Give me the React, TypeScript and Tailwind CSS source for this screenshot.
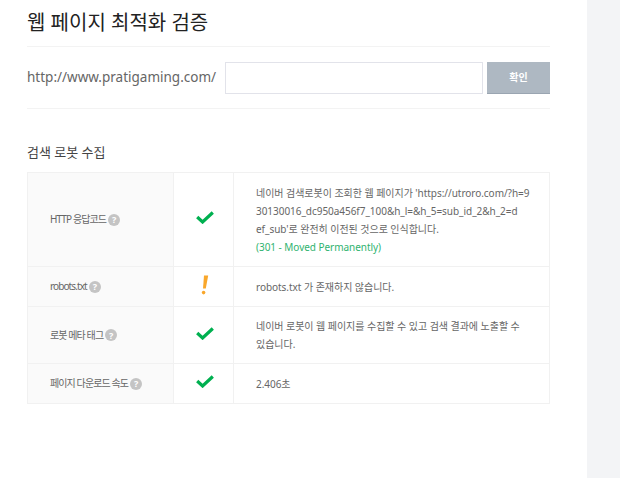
const font = { fontFamily: '"Noto Sans", "Noto Sans CJK KR", "Liberation Sans", sans-serif' };

function Help() {
  return (
    <span className="ml-[2px] inline-flex h-[12px] w-[12px] shrink-0 items-center justify-center rounded-full bg-[#c4c4c4] text-[9px] leading-none font-bold tracking-normal text-white">
      ?
    </span>
  );
}

function Check() {
  return (
    <svg className="ml-[3px]" width="18" height="13" viewBox="0 0 18 13" fill="none">
      <path d="M1.2 6 L6.6 11 L16.8 1.5" stroke="#00b050" strokeWidth="3.2" />
    </svg>
  );
}

function Warn() {
  return (
    <svg className="ml-[3px]" width="8" height="20" viewBox="0 0 8 20" fill="#f9a72b">
      <path d="M3 0.5 H7.2 L4.8 13.5 H2 Z" />
      <circle cx="2.6" cy="17.6" r="1.8" />
    </svg>
  );
}

const rows = [
  {
    h: "h-[94px]",
    label: "HTTP 응답코드",
    icon: <Check />,
    body: (
      <>
        네이버 검색로봇이 조회한 웹 페이지가 'https://utroro.com/?h=9
        <br />
        30130016_dc950a456f7_100&amp;h_l=&amp;h_5=sub_id_2&amp;h_2=d
        <br />
        ef_sub'로 완전히 이전된 것으로 인식합니다.
        <br />
        <span className="text-[#2fb36f]">(301 - Moved Permanently)</span>
      </>
    ),
  },
  { h: "h-[40px]", label: "robots.txt", icon: <Warn />, body: "robots.txt 가 존재하지 않습니다." },
  {
    h: "h-[57px]",
    label: "로봇 메타 태그",
    icon: <Check />,
    body: (
      <>
        네이버 로봇이 웹 페이지를 수집할 수 있고 검색 결과에 노출할 수
        <br />
        있습니다.
      </>
    ),
  },
  { h: "h-[40px]", label: "페이지 다운로드 속도", icon: <Check />, body: "2.406초" },
];

export default function App() {
  return (
    <div className="flex h-[478px] w-[620px] overflow-hidden bg-white" style={font}>
      <main className="w-[587px] pr-[37px] pl-[27px]">
        <h1 className="h-[47px] border-b border-[#f3f3f3] pt-[7px] text-[20px] leading-[32px] font-normal text-[#222]">
          웹 페이지 최적화 검증
        </h1>
        <div className="flex h-[62px] items-center border-b border-[#f3f3f3]">
          <span className="w-[198px] text-[13.5px] whitespace-nowrap text-[#666]">http://www.pratigaming.com/</span>
          <input className="h-[32px] w-[258px] border border-[#e2e3ea] bg-white" />
          <button className="ml-[4px] h-[32px] w-[63px] border-b border-[#9aa5b1] bg-[#aeb8c2] text-[10px] font-bold text-white">
            확인
          </button>
        </div>
        <h2 className="mt-[33px] text-[13px] leading-[20px] font-normal text-[#444]">검색 로봇 수집</h2>
        <div className="mt-[10px] border-t border-r border-l border-[#f1f1f1]">
          {rows.map((r) => (
            <div key={r.label} className={`flex border-b border-[#f1f1f1] ${r.h}`}>
              <div className="flex w-[146px] items-center border-r border-[#f1f1f1] bg-[#fafafa] pl-[22px] text-[10px] tracking-[-0.9px] whitespace-nowrap text-[#666]">
                {r.label}
                <Help />
              </div>
              <div className="flex w-[60px] items-center justify-center border-r border-[#f1f1f1] pb-[4px]">{r.icon}</div>
              <div className="flex flex-1 items-center pl-[22px] text-[10px] leading-[18px] tracking-[-0.04px] whitespace-nowrap text-[#666]">
                <div>{r.body}</div>
              </div>
            </div>
          ))}
        </div>
      </main>
      <aside className="flex-1 bg-[#f3f4f6]" />
    </div>
  );
}
